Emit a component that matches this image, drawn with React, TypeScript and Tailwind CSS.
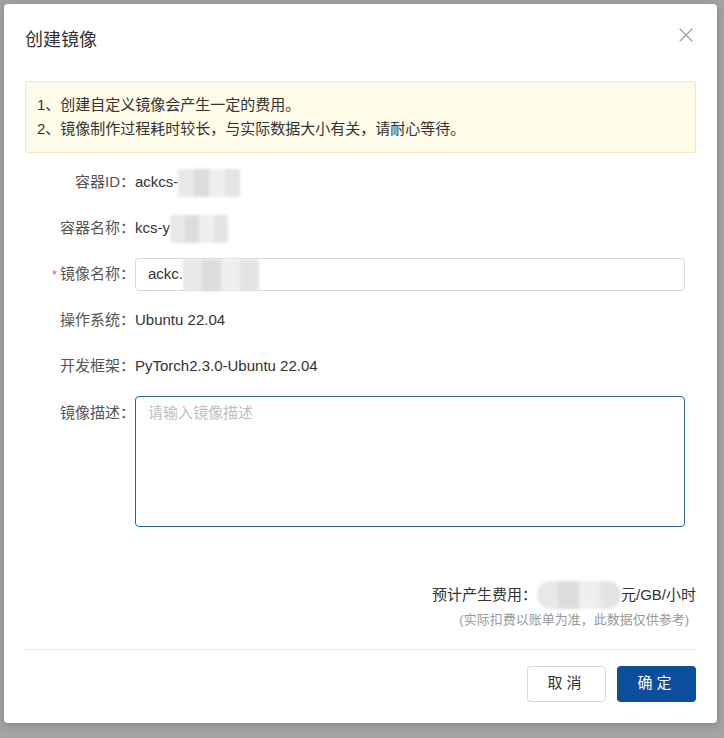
import { X } from "lucide-react";

const sans = "font-['Liberation_Sans','Noto_Sans_CJK_SC',sans-serif]";

// stand-in for the pixelated/blurred values in the screenshot
function Masked({ w, h, round }: { w: number; h: number; round?: boolean }) {
  return (
    <span
      className={`inline-flex overflow-hidden blur-[1.5px] ${round ? "rounded-full" : "rounded-[3px]"}`}
      style={{ width: w, height: h }}
    >
      <span className="flex-1 bg-[#e8e8e8]" />
      <span className="flex-1 bg-[#dcdcdc]" />
      <span className="flex-1 bg-[#efefef]" />
      <span className="flex-1 bg-[#e4e4e4]" />
    </span>
  );
}

function Row({ label, required, children }: { label: string; required?: boolean; children: React.ReactNode }) {
  return (
    <div className="flex h-[33px] items-center">
      <div className="w-[110px] shrink-0 text-right text-[15px] text-[#555]">
        {required && <span className="mr-[3px] text-[12px] text-[#e34d4d]">*</span>}
        {label}：
      </div>
      <div className="flex flex-1 items-center text-[15px] text-[#333]">{children}</div>
    </div>
  );
}

export default function App() {
  return (
    <div className={`h-[738px] w-[724px] bg-[#a3a3a3] pl-[4px] pt-[4px] ${sans}`}>
      <div className="relative flex h-[719px] w-[713px] flex-col rounded-[4px] bg-white px-[21px] shadow-[0_2px_8px_rgba(0,0,0,0.2)]">
        <div className="flex items-center justify-between pt-[24px]">
          <h1 className="text-[18px] leading-[24px] text-[#333]">创建镜像</h1>
          <button className="mr-[-2px] mt-[-10px] text-[#9a9a9a]">
            <X size={24} strokeWidth={1.1} />
          </button>
        </div>

        <div className="mt-[29px] rounded-[2px] border border-[#f7e7b5] bg-[#fffbe9] px-[11px] py-[11px] text-[15px] leading-[24px] text-[#333]">
          <p>1、创建自定义镜像会产生一定的费用。</p>
          <p>2、镜像制作过程耗时较长，与实际数据大小有关，请耐心等待。</p>
        </div>

        <div className="mt-[13px] flex flex-col gap-[13px]">
          <Row label="容器ID">
            ackcs-<Masked w={62} h={28} />
          </Row>
          <Row label="容器名称">
            kcs-y<Masked w={58} h={28} />
          </Row>
          <Row label="镜像名称" required>
            <div className="flex h-[33px] w-[550px] items-center rounded-[4px] border border-[#d9d9d9] px-[12px]">
              ackc.<Masked w={76} h={32} />
            </div>
          </Row>
          <Row label="操作系统">Ubuntu 22.04</Row>
          <Row label="开发框架">PyTorch2.3.0-Ubuntu 22.04</Row>
          <div className="flex">
            <div className="w-[110px] shrink-0 pt-[6px] text-right text-[15px] text-[#555]">镜像描述：</div>
            <textarea
              placeholder="请输入镜像描述"
              className="h-[131px] w-[550px] resize-none rounded-[4px] border border-[#2e6496] px-[12px] py-[5px] text-[15px] text-[#333] outline-none placeholder:text-[#c0c0c0]"
            />
          </div>
        </div>

        <div className="mt-[54px] flex flex-col items-end">
          <div className="flex h-[28px] items-center text-[15px] text-[#333]">
            预计产生费用：
            <Masked w={84} h={28} round />
            元/GB/小时
          </div>
          <div className="mr-[7px] mt-[1px] text-[13px] text-[#999]">(实际扣费以账单为准，此数据仅供参考)</div>
        </div>

        <div className="mt-[19px] border-t border-[#e8e8e8]" />

        <div className="mt-[16px] flex justify-end gap-[11px]">
          <button className="h-[36px] w-[79px] rounded-[4px] border border-[#d9d9d9] bg-white text-[15px] tracking-[4px] text-[#333]">
            取消
          </button>
          <button className="h-[36px] w-[79px] rounded-[4px] bg-[#0b4e9d] text-[15px] tracking-[4px] text-white">
            确定
          </button>
        </div>
      </div>
    </div>
  );
}
